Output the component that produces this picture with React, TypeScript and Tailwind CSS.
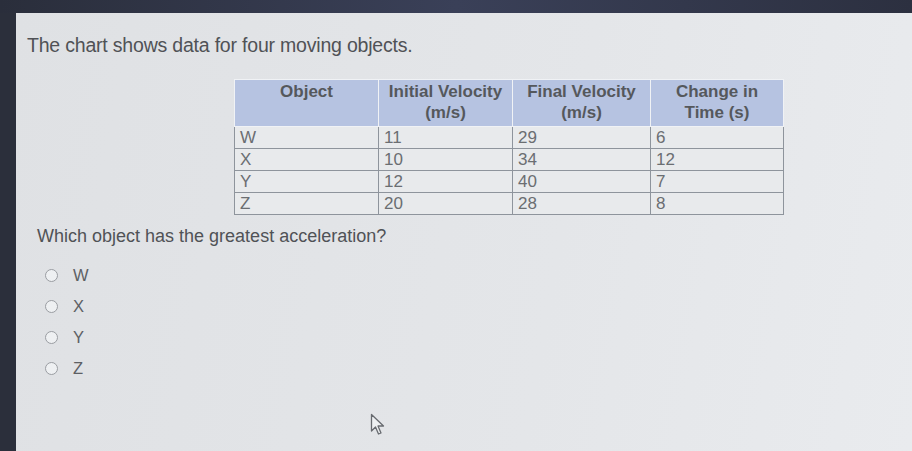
const rows = [
  ['W', '11', '29', '6'],
  ['X', '10', '34', '12'],
  ['Y', '12', '40', '7'],
  ['Z', '20', '28', '8'],
]

const choices = ['W', 'X', 'Y', 'Z']

function Cursor() {
  return (
    <svg className="absolute left-[354px] top-[400px]" width="16" height="23" viewBox="0 0 16 23" fill="none">
      <path
        d="M1.5 1.5 L1.5 18 L5.5 14 L8.5 21 L11 20 L8 13 L13.5 13 Z"
        stroke="#686b70"
        strokeWidth="1.3"
        strokeLinejoin="round"
        fill="#eef0f2"
      />
    </svg>
  )
}

export default function App() {
  return (
    <div
      className="flex h-[451px] w-[912px] flex-col overflow-hidden bg-[#2d3141] text-[#505256]"
      style={{ fontFamily: '"Liberation Sans", Arial, sans-serif' }}
    >
      <div className="h-[13px] shrink-0 bg-[linear-gradient(90deg,#2a2e3b,#3a4058_50%,#2c3040)]" />
      <div className="flex flex-1">
        <div className="w-[16px] shrink-0 bg-[#2b2f3b]" />
        <div className="relative flex-1 bg-[linear-gradient(100deg,#dfe1e4,#e4e6e9_60%,#e9ebee)] pl-[11px] pt-[20px]">
          <p className="text-[19.5px] leading-[24px] tracking-[-0.2px]">The chart shows data for four moving objects.</p>

          <table className="ml-[207px] mt-[22px] w-[550px] border-collapse border border-[#8e949c] text-[17px] leading-[21px]">
            <thead>
              <tr className="bg-[#b6c3e1] font-bold text-[#55585c]">
                <th className="w-[144px] border border-[#f0f2f5] px-1 pb-[3px] pt-[1px] align-top">Object</th>
                <th className="w-[134px] border border-[#f0f2f5] px-1 pb-[3px] pt-[1px] align-top">
                  Initial Velocity
                  <br />
                  (m/s)
                </th>
                <th className="w-[138px] border border-[#f0f2f5] px-1 pb-[3px] pt-[1px] align-top">
                  Final Velocity
                  <br />
                  (m/s)
                </th>
                <th className="border border-[#f0f2f5] px-1 pb-[3px] pt-[1px] align-top">
                  Change in
                  <br />
                  Time (s)
                </th>
              </tr>
            </thead>
            <tbody>
              {rows.map((r) => (
                <tr key={r[0]} className="bg-[#e8eaec] text-[#6b6e72]">
                  {r.map((c, i) => (
                    <td key={i} className="h-[22px] border border-[#8e949c] px-[5px] py-0 font-light">
                      {c}
                    </td>
                  ))}
                </tr>
              ))}
            </tbody>
          </table>

          <p className="ml-[10px] mt-[10px] text-[18px] leading-[22px]">Which object has the greatest acceleration?</p>

          <div className="ml-[18px] mt-[19px] flex flex-col gap-[12px]">
            {choices.map((c) => (
              <label key={c} className="flex items-center gap-[15px] text-[16.5px] leading-[19px] text-[#5d6064]">
                <span className="h-[13px] w-[13px] rounded-full border-[1.5px] border-[#9a9da2] bg-[#eef0f2]" />
                {c}
              </label>
            ))}
          </div>

          <Cursor />
        </div>
      </div>
    </div>
  )
}
